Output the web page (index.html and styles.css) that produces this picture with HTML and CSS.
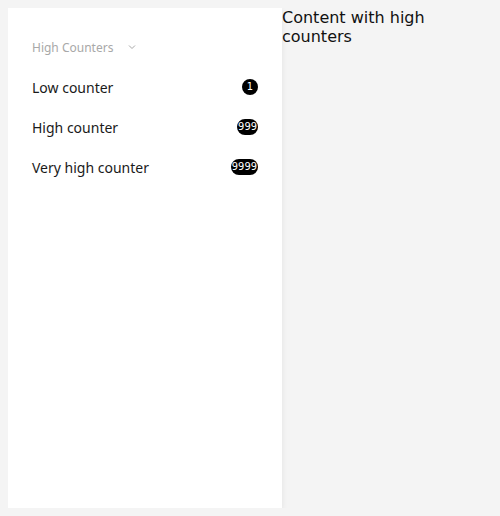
FILE: index.html
```html
<!DOCTYPE html>
<html>
<head>
<meta charset="utf-8">
<link rel="stylesheet" href="styles.css">
</head>
<body>
<nav class="sidebar">
  <div class="group-header">
    <span class="group-title">High Counters</span>
    <svg class="chevron" width="8" height="6" viewBox="0 0 8 6"><path d="M1 1.5 L4 4.5 L7 1.5" fill="none" stroke="#a8a8a8" stroke-width="1"/></svg>
  </div>
  <div class="item"><span class="label">Low counter</span><span class="badge round">1</span></div>
  <div class="item"><span class="label">High counter</span><span class="badge">999</span></div>
  <div class="item"><span class="label">Very high counter</span><span class="badge">9999</span></div>
</nav>
<main class="content">Content with high counters</main>
</body>
</html>
```
FILE: styles.css
```css
html, body { height: 100%; }
body {
  margin: 8px;
  background: #f4f4f4;
  display: flex;
  align-items: flex-start;
  font-family: "DejaVu Sans", sans-serif;
  height: 500px;
}
.sidebar {
  width: 274px;
  height: 500px;
  flex-shrink: 0;
  background: #fff;
  box-shadow: 0 2px 6px rgba(0,0,0,0.08);
  padding: 19px 24px 0;
  box-sizing: border-box;
  font-family: "Noto Sans", sans-serif;
}
.group-header {
  height: 40px;
  display: flex;
  align-items: center;
  gap: 15px;
}
.group-title {
  font-size: 12px;
  color: #a8a8a8;
}
.chevron { display: block; }
.item {
  height: 40px;
  display: flex;
  align-items: center;
  justify-content: space-between;
}
.label {
  font-size: 14px;
  color: #1a1a1a;
}
.badge {
  background: #000;
  color: #fff;
  font-family: "DejaVu Sans Condensed", "DejaVu Sans", sans-serif;
  font-size: 11px;
  height: 16px;
  line-height: 16px;
  min-width: 16px;
  border-radius: 8px;
  text-align: center;
  box-sizing: border-box;
  padding: 0 1px;
}
.content {
  font-size: 16px;
  color: #111;
  width: 210px;
  line-height: 19px;
}
```
